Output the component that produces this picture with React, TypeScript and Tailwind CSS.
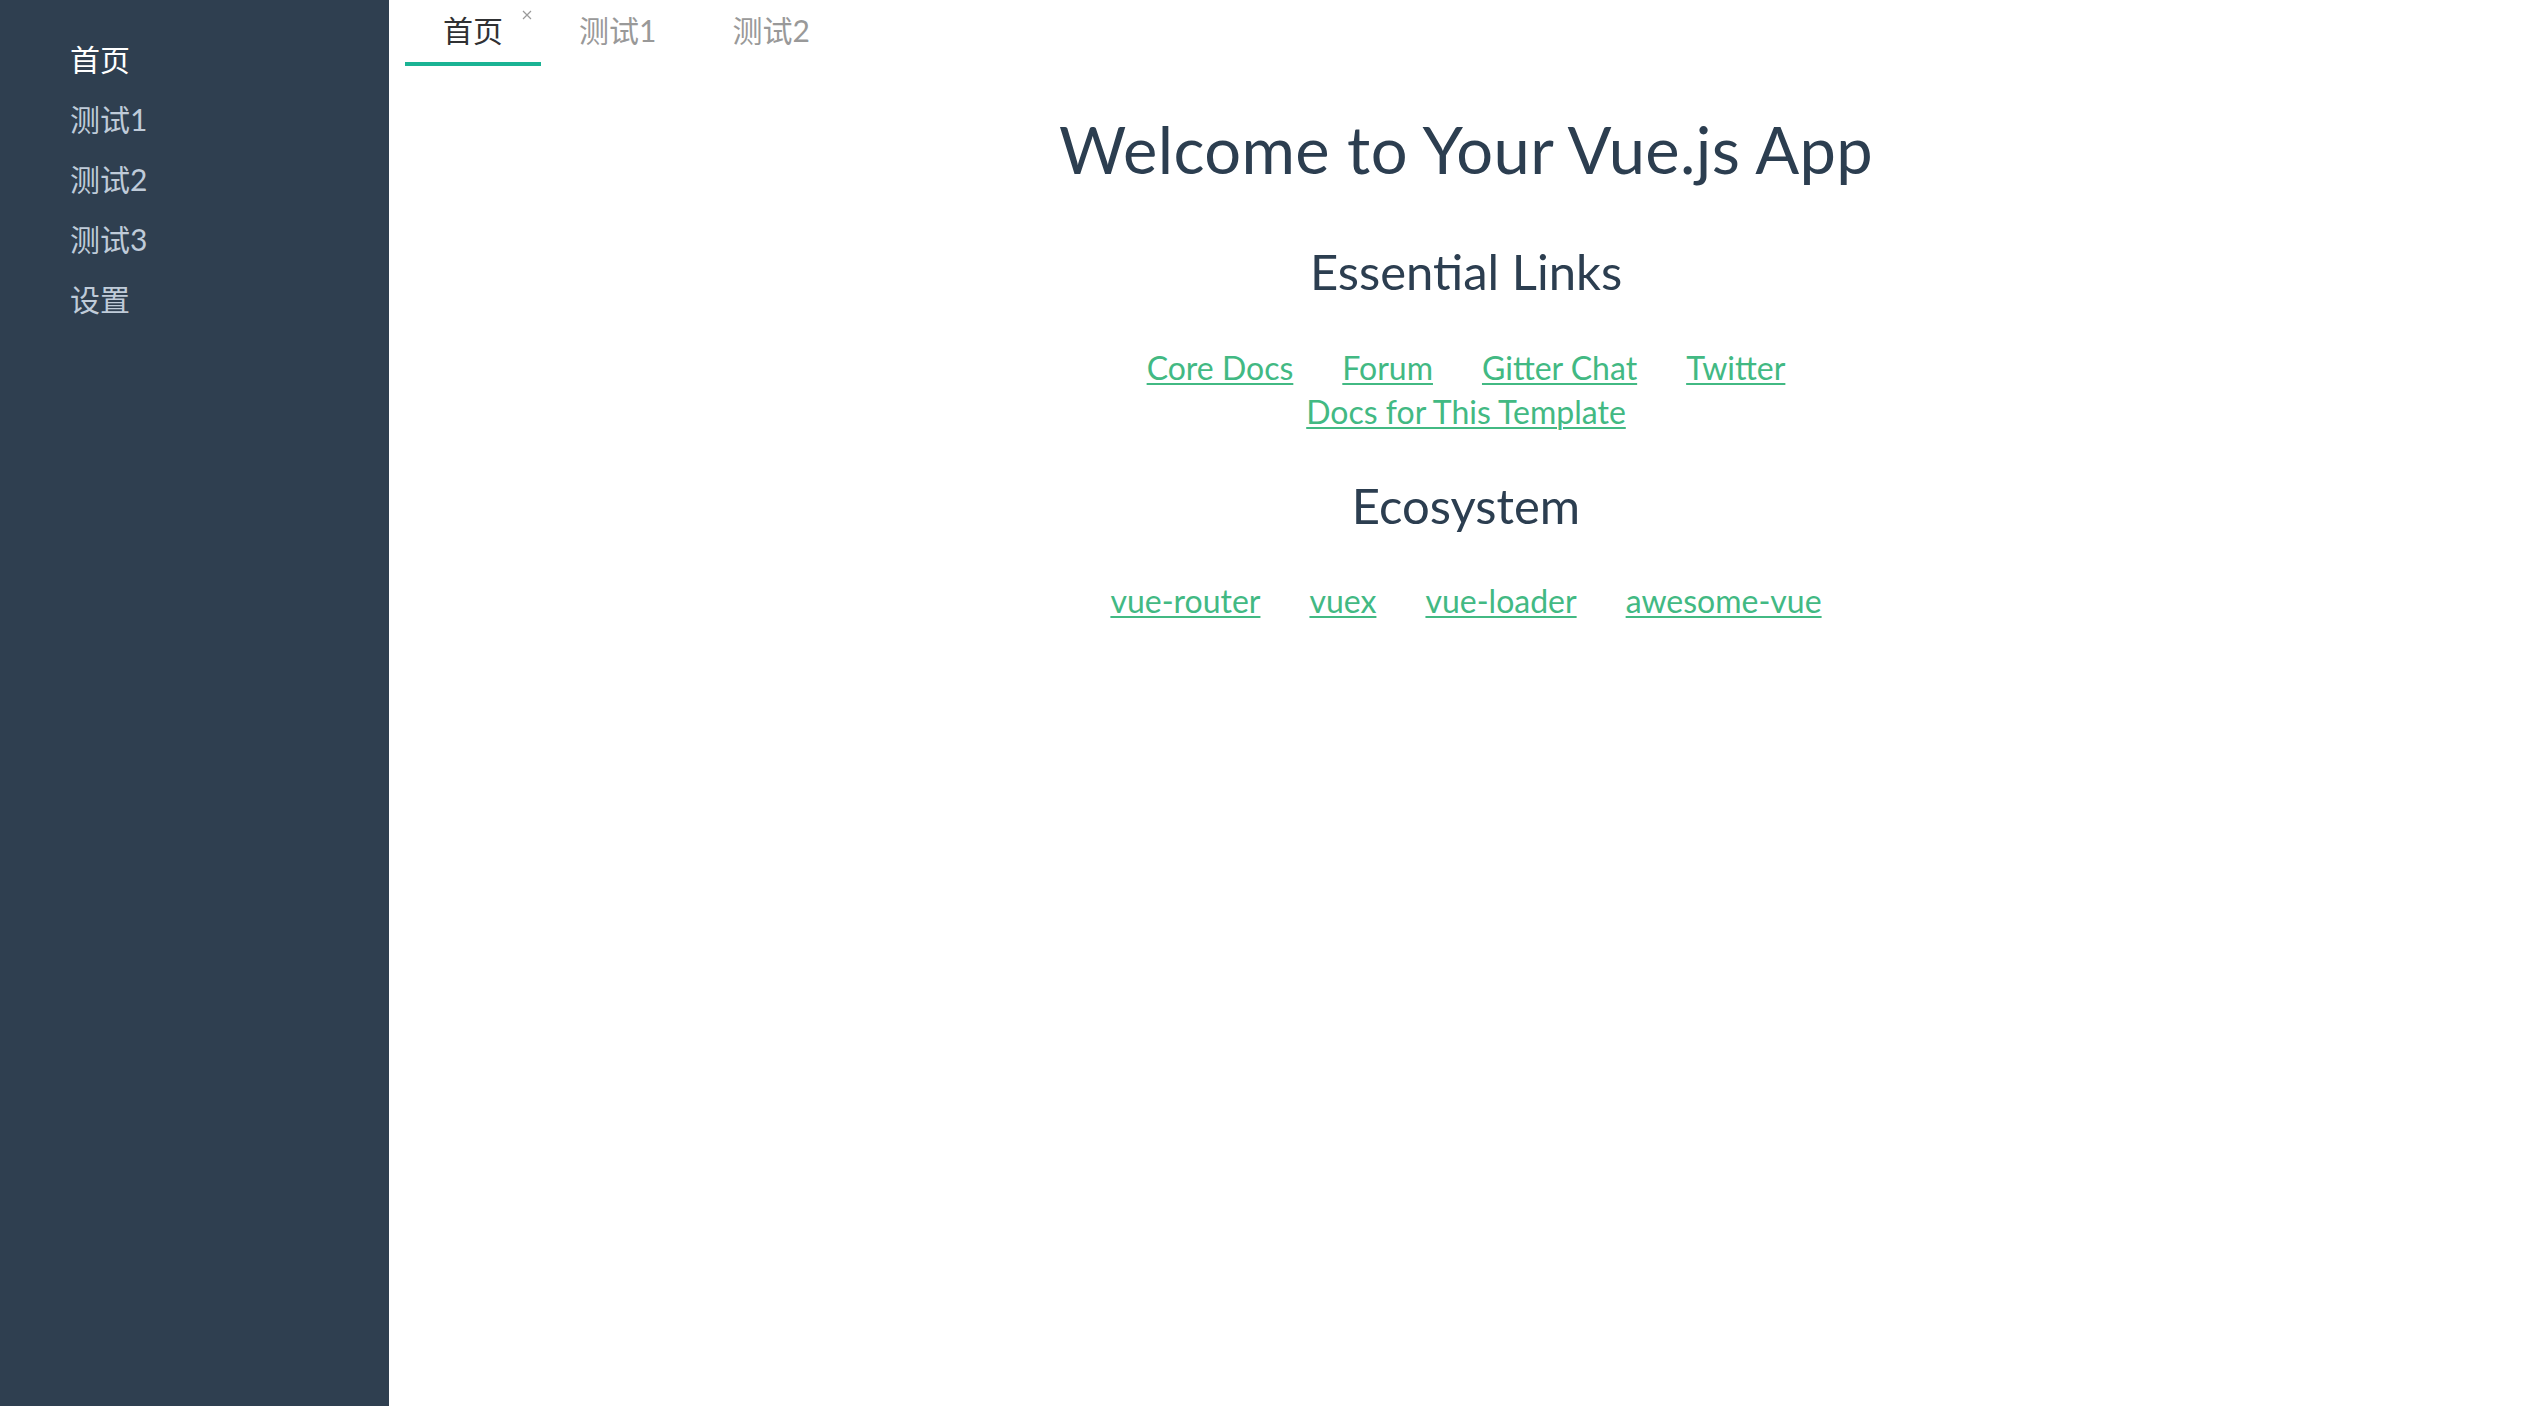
const menu = ["首页", "测试1", "测试2", "测试3", "设置"];
const tabs = ["首页", "测试1", "测试2"];
const essential = ["Core Docs", "Forum", "Gitter Chat", "Twitter"];
const ecosystem = ["vue-router", "vuex", "vue-loader", "awesome-vue"];

function LinkRow({ items }: { items: string[] }) {
  return (
    <div className="flex justify-center gap-x-[49px] h-[44px] leading-[44px]">
      {items.map((t) => (
        <a
          key={t}
          href="#"
          className="text-[#42b983] underline decoration-2 underline-offset-[3px]"
        >
          {t}
        </a>
      ))}
    </div>
  );
}

export default function App() {
  return (
    <div className="flex h-[1406px] w-full bg-white font-['Lato','Noto_Sans_CJK_SC',sans-serif]">
      <aside className="w-[389px] shrink-0 bg-[#2f3f50] pt-[29px] pl-[70px]">
        {menu.map((m, i) => (
          <div
            key={m}
            className={`h-[60px] leading-[60px] text-[30px] ${i === 0 ? "text-white" : "text-[#bfcbd9]"}`}
          >
            {m}
          </div>
        ))}
      </aside>

      <main className="flex-1">
        {/* tabs */}
        <div className="flex pl-[16px] h-[66px]">
          {tabs.map((t, i) => (
            <div
              key={t}
              className={`relative h-[66px] px-[38px] leading-[61px] text-[30px] border-b-4 ${
                i === 0 ? "border-[#1ab394] text-[#303133]" : "border-transparent text-[#999999]"
              }`}
            >
              {t}
              {i === 0 && (
                <svg
                  className="absolute top-[10px] right-[9px]"
                  width="10"
                  height="10"
                  viewBox="0 0 10 10"
                >
                  <path d="M1 1 L9 9 M9 1 L1 9" stroke="#9a9a9a" strokeWidth="1.2" />
                </svg>
              )}
            </div>
          ))}
        </div>

        <div className="text-center text-[#2c3e50]">
          <h1 className="mt-[44px] text-[65px] leading-[78px] font-normal tracking-[0.4px]">
            Welcome to Your Vue.js App
          </h1>
          <h2 className="mt-[54px] text-[49px] leading-[59px] font-normal">Essential Links</h2>
          <div className="mt-[45px] text-[32px]">
            <LinkRow items={essential} />
            <LinkRow items={["Docs for This Template"]} />
          </div>
          <h2 className="mt-[42px] text-[49px] leading-[59px] font-normal">Ecosystem</h2>
          <div className="mt-[44px] text-[32px]">
            <LinkRow items={ecosystem} />
          </div>
        </div>
      </main>
    </div>
  );
}
